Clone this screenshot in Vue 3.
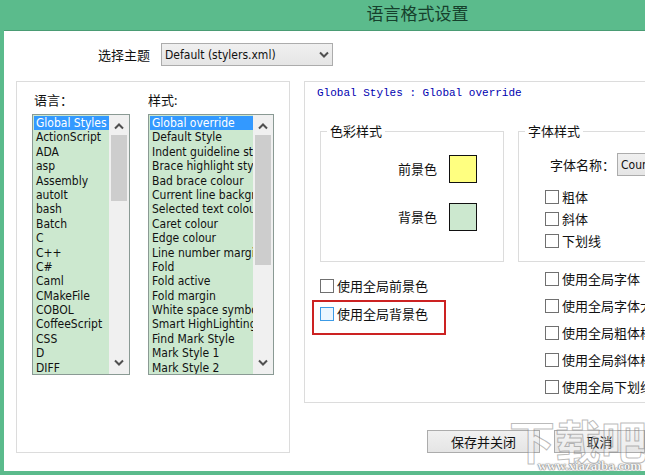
<template>
  <div class="window">
    <header class="title-bar">
      <h1 class="title">语言格式设置</h1>
    </header>

    <div class="theme-row">
      <label for="theme">选择主题</label>
      <div class="combo theme-combo">
        <select id="theme" v-model="theme">
          <option>Default (stylers.xml)</option>
        </select>
        <svg class="combo-arrow" width="10" height="8" viewBox="0 0 10 8">
          <path d="M1 1.5l4 4 4-4" />
        </svg>
      </div>
    </div>

    <div class="content">
      <section class="panel lists-panel">
        <div
          v-for="list in lists"
          :key="list.id"
          :class="['list-col', list.id]"
        >
          <label :for="list.id">{{ list.label }}</label>
          <div class="list-box">
            <select :id="list.id" v-model="list.value" size="18">
              <option v-for="item in list.items" :key="item" :value="item">
                {{ item }}
              </option>
            </select>
            <div class="scrollbar">
              <svg width="10" height="8" viewBox="0 0 10 8">
                <path d="M1 6.5l4-4 4 4" />
              </svg>
              <div class="track"><div class="thumb"></div></div>
              <svg width="10" height="8" viewBox="0 0 10 8">
                <path d="M1 1.5l4 4 4-4" />
              </svg>
            </div>
          </div>
        </div>
      </section>

      <div class="right-col">
        <section class="panel style-panel">
          <p class="current">{{ lists[0].value }} : {{ lists[1].value }}</p>
          <div class="columns">
            <fieldset class="color-group">
              <legend>色彩样式</legend>
              <div class="color-row">
                <label for="fg">前景色</label>
                <button id="fg" class="swatch yellow"></button>
              </div>
              <div class="color-row">
                <label for="bg">背景色</label>
                <button id="bg" class="swatch green"></button>
              </div>
            </fieldset>

            <fieldset class="font-group">
              <legend>字体样式</legend>
              <div class="font-row">
                <label for="font">字体名称：</label>
                <div class="combo font-combo">
                  <select id="font" v-model="font">
                    <option>Courier New</option>
                  </select>
                </div>
              </div>
              <label v-for="item in fontStyles" :key="item" class="check">
                <input type="checkbox" />{{ item }}
              </label>
            </fieldset>
          </div>

          <div class="columns">
            <div class="global-colors">
              <label class="check"><input type="checkbox" />使用全局前景色</label>
              <div class="marked">
                <label class="check hot"><input type="checkbox" />使用全局背景色</label>
              </div>
            </div>
            <div class="global-fonts">
              <label v-for="item in globalFonts" :key="item" class="check">
                <input type="checkbox" />{{ item }}
              </label>
            </div>
          </div>
        </section>

        <div class="buttons">
          <button class="btn save">保存并关闭</button>
          <button class="btn cancel">取消</button>
        </div>
      </div>
    </div>

    <div class="watermark">
      <span class="mark-name">下载吧</span>
      <span class="mark-url">www.xiazaiba.com</span>
    </div>
  </div>
</template>

<script setup>
import { reactive, ref } from "vue";

const theme = ref("Default (stylers.xml)");
const font = ref("Courier New");

const lists = reactive([
  {
    id: "language",
    label: "语言：",
    value: "Global Styles",
    items: [
      "Global Styles",
      "ActionScript",
      "ADA",
      "asp",
      "Assembly",
      "autoIt",
      "bash",
      "Batch",
      "C",
      "C++",
      "C#",
      "Caml",
      "CMakeFile",
      "COBOL",
      "CoffeeScript",
      "CSS",
      "D",
      "DIFF",
    ],
  },
  {
    id: "style",
    label: "样式:",
    value: "Global override",
    items: [
      "Global override",
      "Default Style",
      "Indent guideline style",
      "Brace highlight style",
      "Bad brace colour",
      "Current line background",
      "Selected text colour",
      "Caret colour",
      "Edge colour",
      "Line number margin",
      "Fold",
      "Fold active",
      "Fold margin",
      "White space symbol",
      "Smart HighLighting",
      "Find Mark Style",
      "Mark Style 1",
      "Mark Style 2",
    ],
  },
]);

const fontStyles = ["粗体", "斜体", "下划线"];
const globalFonts = [
  "使用全局字体",
  "使用全局字体大小",
  "使用全局粗体样式",
  "使用全局斜体样式",
  "使用全局下划线样式",
];
</script>

<style>
body {
  margin: 0;
  background: #fff;
}
</style>

<style scoped>
.window {
  position: relative;
  overflow: hidden;
  border-left: 4px solid #5bbb8c;
  border-bottom: 4px solid #5bbb8c;
  background: #fff;
  color: #111;
  font-family: "Noto Sans", "Noto Sans CJK SC", sans-serif;
  font-size: 13px;
  line-height: 18px;
}
.window * {
  box-sizing: border-box;
}
select,
button,
input {
  margin: 0;
  font-family: inherit;
  color: inherit;
}
svg {
  fill: none;
  stroke: #505050;
  stroke-width: 2;
}
.title-bar {
  height: 31px;
  margin-left: -4px;
  padding-left: 190px;
  background: #5bbb8c;
  border-bottom: 1px solid #4a9c74;
  text-align: center;
}
.title {
  margin: 0;
  font-size: 17px;
  font-weight: 400;
  line-height: 28px;
  color: #16402c;
}
.theme-row {
  display: flex;
  align-items: center;
  gap: 11px;
  padding: 12px 0 15px 94px;
}
.combo {
  position: relative;
}
.combo select {
  appearance: none;
  width: 100%;
  height: 23px;
  padding: 0 3px;
  border: 1px solid #acacac;
  border-radius: 0;
  background: linear-gradient(#f0f0f0, #e5e5e5);
  font-family: "DejaVu Sans Condensed", "Noto Sans", sans-serif;
  font-size: 12px;
}
.combo-arrow {
  position: absolute;
  right: 4px;
  top: 8px;
  pointer-events: none;
}
.theme-combo {
  width: 172px;
}
.content {
  display: flex;
  align-items: stretch;
  gap: 14px;
  padding: 0 0 18px 12px;
}
.panel {
  border: 1px solid #dcdcdc;
}
.lists-panel {
  flex: none;
  display: flex;
  gap: 18px;
  width: 274px;
  padding: 9px 15px;
}
.list-col > label {
  display: block;
  height: 23px;
  padding-left: 2px;
}
.list-col.language {
  width: 98px;
}
.list-col.style {
  width: 126px;
}
.list-col.style > label {
  padding-left: 0;
}
.list-box {
  display: flex;
  border: 1px solid #8a9a94;
  background: #cce8cf;
}
.list-box select {
  flex: 1;
  min-width: 0;
  height: 259px;
  padding: 1px 0 0 1px;
  border: none;
  border-radius: 0;
  outline: none;
  overflow: hidden;
  background: #cce8cf;
  font-family: "DejaVu Sans Condensed", "Noto Sans", sans-serif;
  font-size: 12px;
}
.list-box option {
  min-height: 0;
  height: 1.2em;
  padding: 0 0 0 2px;
}
.list-box option:checked {
  background: linear-gradient(#3399ff, #3399ff);
  -webkit-text-fill-color: #fff;
}
.scrollbar {
  flex: none;
  display: flex;
  flex-direction: column;
  align-items: center;
  gap: 5px;
  width: 20px;
  padding: 7px 2px;
  background: #f0f0f0;
}
.track {
  flex: 1;
  width: 100%;
}
.thumb {
  height: 66px;
  background: #cdcdcd;
}
.style .thumb {
  height: 130px;
}
.right-col {
  flex: 1;
  min-width: 0;
}
.style-panel {
  height: 322px;
  border-right: none;
  padding: 2px 0 0 15px;
}
.current {
  margin: 0 0 20px -3px;
  font-family: "Liberation Mono", monospace;
  font-size: 11px;
  color: #0000b0;
  white-space: nowrap;
}
.columns {
  display: grid;
  grid-template-columns: 184px minmax(240px, 1fr);
  gap: 14px;
}
fieldset {
  min-width: 0;
  height: 140px;
  margin: 0;
  padding: 0;
  border: 1px solid #dcdcdc;
}
legend {
  margin-left: 6px;
  padding: 0 3px;
}
.color-row {
  display: flex;
  align-items: center;
  gap: 12px;
  height: 28px;
  margin: 15px 0 20px 77px;
}
.swatch {
  width: 28px;
  height: 28px;
  padding: 0;
  border: 1px solid #111;
  border-radius: 0;
}
.swatch.yellow {
  background: #ffff80;
}
.swatch.green {
  background: #cce8cf;
}
.font-row {
  display: flex;
  align-items: center;
  margin: 13px 0 10px 31px;
}
.font-row label {
  width: 67px;
  white-space: nowrap;
}
.font-combo {
  width: 130px;
}
.font-group .check {
  height: 22px;
  margin-left: 26px;
}
.check {
  display: flex;
  align-items: center;
  gap: 3px;
  white-space: nowrap;
}
.check input {
  appearance: none;
  flex: none;
  width: 14px;
  height: 14px;
  border: 1px solid #707070;
  background: #fff;
}
.check input:checked {
  background: #3399ff;
}
.check.hot input {
  border-color: #3c9be6;
  background: #eaf6ff;
}
.global-colors {
  padding-top: 15px;
}
.marked {
  width: 134px;
  margin: 5px 0 0 -8px;
  padding: 3px 6px 10px;
  border: 2px solid #cc2222;
}
.global-fonts {
  padding: 3px 0 0 27px;
}
.global-fonts .check {
  height: 27px;
}
.buttons {
  display: flex;
  gap: 14px;
  padding: 27px 0 0 123px;
}
.btn {
  height: 23px;
  padding: 0;
  border: 1px solid #acacac;
  border-radius: 0;
  background: linear-gradient(#f0f0f0, #e5e5e5);
  font-size: 13px;
}
.btn.save {
  flex: none;
  width: 113px;
}
.btn.cancel {
  flex: 1;
}
.watermark {
  position: absolute;
  right: 0;
  bottom: -4px;
  width: 136px;
  height: 58px;
  pointer-events: none;
  white-space: nowrap;
}
.mark-name {
  position: absolute;
  left: 0;
  top: 0;
  font-size: 46px;
  font-weight: 700;
  line-height: 48px;
  color: rgba(255, 255, 255, 0.3);
  -webkit-text-stroke: 1px rgba(120, 120, 120, 0.5);
}
.mark-url {
  position: absolute;
  right: 4px;
  bottom: 2px;
  font-family: "Liberation Serif", serif;
  font-size: 13px;
  font-weight: 700;
  line-height: 14px;
  color: #f4f4f4;
  text-shadow: 0 0 1px #777, 0 0 1px #777, 0 0 2px #999;
}
</style>
